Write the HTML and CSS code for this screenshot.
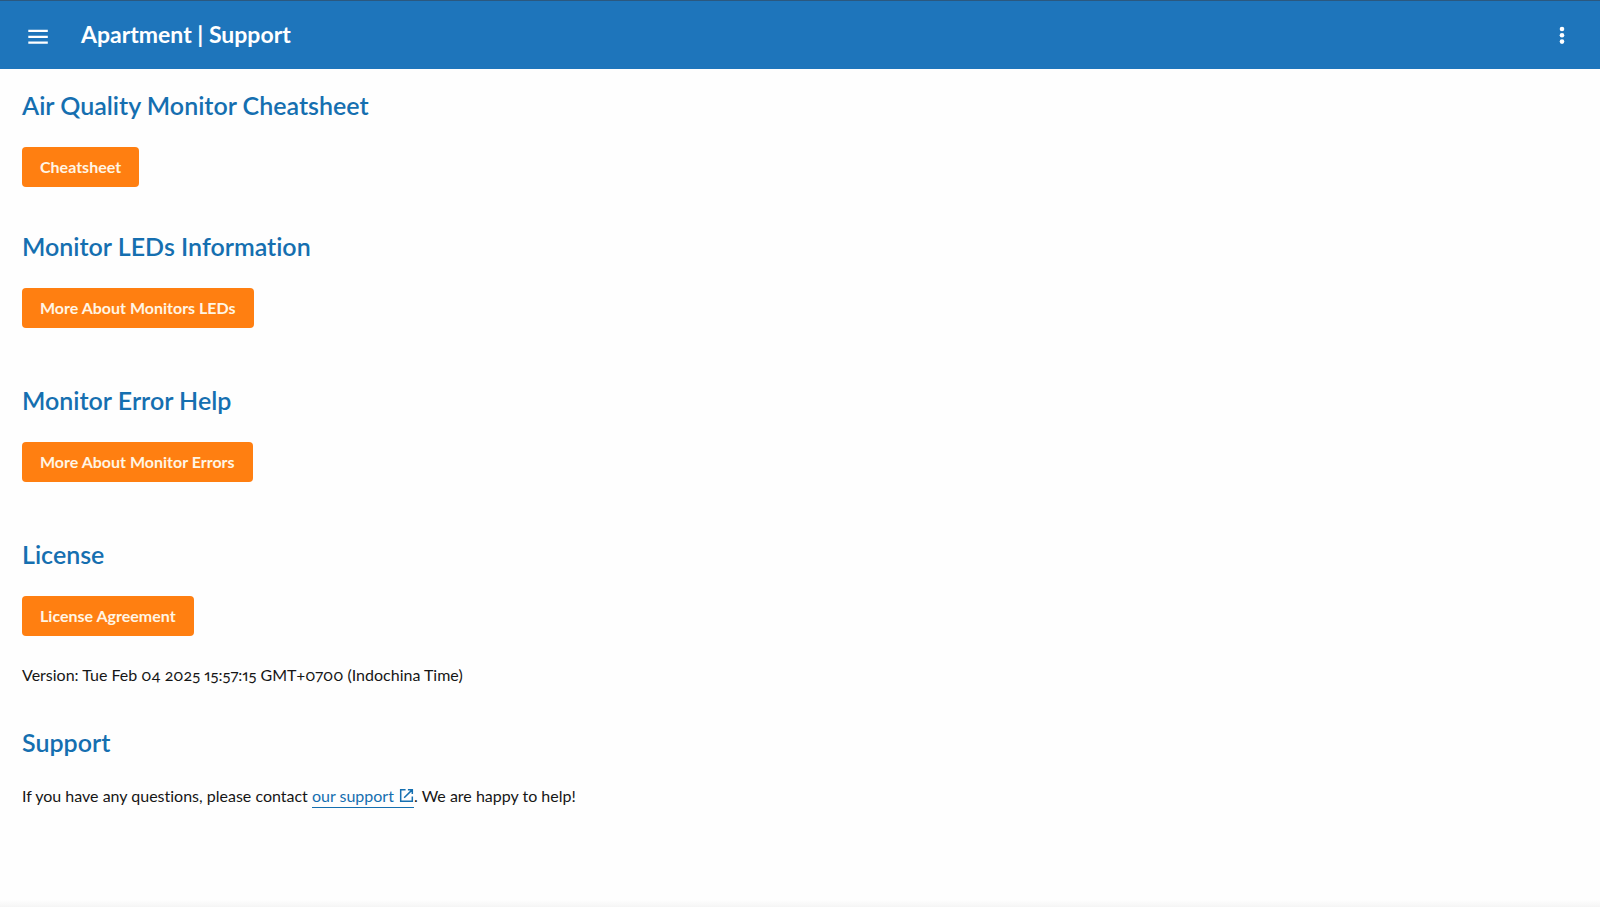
FILE: index.html
```html
<!DOCTYPE html>
<html lang="en">
<head>
<meta charset="utf-8">
<meta name="viewport" content="width=device-width, initial-scale=1">
<title>Apartment | Support</title>
<link rel="stylesheet" href="styles.css">
</head>
<body>
<header class="topbar">
  <button class="icon-button" type="button" aria-label="Open menu">
    <svg class="icon" viewBox="0 0 24 24" aria-hidden="true"><path fill="currentColor" d="M2.3 6.8h19.5v2.2H2.3zM2.3 12.7h19.5v2.2H2.3zM2.3 18.6h19.5v2.2H2.3z"/></svg>
  </button>
  <h1 class="topbar-title">Apartment | Support</h1>
  <button class="icon-button" type="button" aria-label="More options">
    <svg class="icon" viewBox="0 0 24 24" aria-hidden="true"><g fill="currentColor"><circle cx="12" cy="6" r="2.3"/><circle cx="12" cy="12.3" r="2.3"/><circle cx="12" cy="18.6" r="2.3"/></g></svg>
  </button>
</header>
<main class="content">
  <section class="section">
    <h2 class="heading">Air Quality Monitor Cheatsheet</h2>
    <button class="button" type="button">Cheatsheet</button>
  </section>
  <section class="section section-wide">
    <h2 class="heading">Monitor LEDs Information</h2>
    <button class="button" type="button">More About Monitors LEDs</button>
  </section>
  <section class="section section-wide">
    <h2 class="heading">Monitor Error Help</h2>
    <button class="button" type="button">More About Monitor Errors</button>
  </section>
  <section class="section section-tight">
    <h2 class="heading">License</h2>
    <button class="button" type="button">License Agreement</button>
    <p class="text">Version: Tue Feb 04 2025 15:57:15 GMT+0700 (Indochina Time)</p>
  </section>
  <section class="section">
    <h2 class="heading">Support</h2>
    <p class="text">If you have any questions, please contact <a class="link" href="#support">our support <svg class="link-icon" viewBox="0 0 16 16" aria-hidden="true"><path fill="none" stroke="currentColor" stroke-width="1.6" d="M7 1.8H1.8v12.4h12.4V9M9.5 1.8h4.7v4.7M14 2 5.5 10.5"/></svg></a>. We are happy to help!</p>
  </section>
</main>
<footer class="page-edge"></footer>
</body>
</html>
```
FILE: styles.css
```css
* {
  box-sizing: border-box;
}

body {
  display: flex;
  flex-direction: column;
  min-height: 100vh;
  margin: 0;
  background: #fefefe;
  color: #161616;
  font-family: Lato, "Open Sans", sans-serif;
  font-size: 16px;
  font-variant-ligatures: none;
  font-variant-numeric: oldstyle-nums proportional-nums;
}

.topbar {
  display: flex;
  align-items: center;
  gap: 31px;
  padding: 20px 26px;
  border-top: 1px solid #2b587f;
  background: #1e75bb;
  color: #fff;
}

.topbar-title {
  flex: 1;
  margin: 0;
  padding-bottom: 2px;
  font-size: 23px;
  font-weight: 700;
  line-height: 26px;
}

.icon-button {
  display: flex;
  padding: 2px 0;
  border: 0;
  background: none;
  color: inherit;
  cursor: pointer;
}

.icon {
  width: 24px;
  height: 24px;
}

.content {
  flex: 1;
  padding: 20px 22px;
}

.section {
  display: flex;
  flex-direction: column;
  align-items: flex-start;
  margin-bottom: 43px;
}

.section-wide {
  margin-bottom: 56px;
}

.section-tight {
  margin-bottom: 39px;
}

.heading {
  margin: 0 0 26px;
  color: #156fb0;
  font-size: 25px;
  font-weight: 600;
  line-height: 32px;
}

.button {
  height: 40px;
  padding: 0 18px 2px;
  border: 0;
  border-radius: 4px;
  background: #ff7f11;
  color: #fff5e4;
  font: inherit;
  font-weight: 700;
  cursor: pointer;
}

.text {
  margin: 0;
  line-height: 24px;
}

.button + .text {
  margin-top: 27px;
}

.link {
  padding-bottom: 2px;
  border-bottom: 1px solid #156fb0;
  color: #156fb0;
  text-decoration: none;
}

.link-icon {
  width: 15px;
  height: 15px;
  margin-left: 1px;
  vertical-align: -1px;
}

.page-edge {
  height: 7px;
  background: linear-gradient(#fefefe, #f5f5f5);
}
```
